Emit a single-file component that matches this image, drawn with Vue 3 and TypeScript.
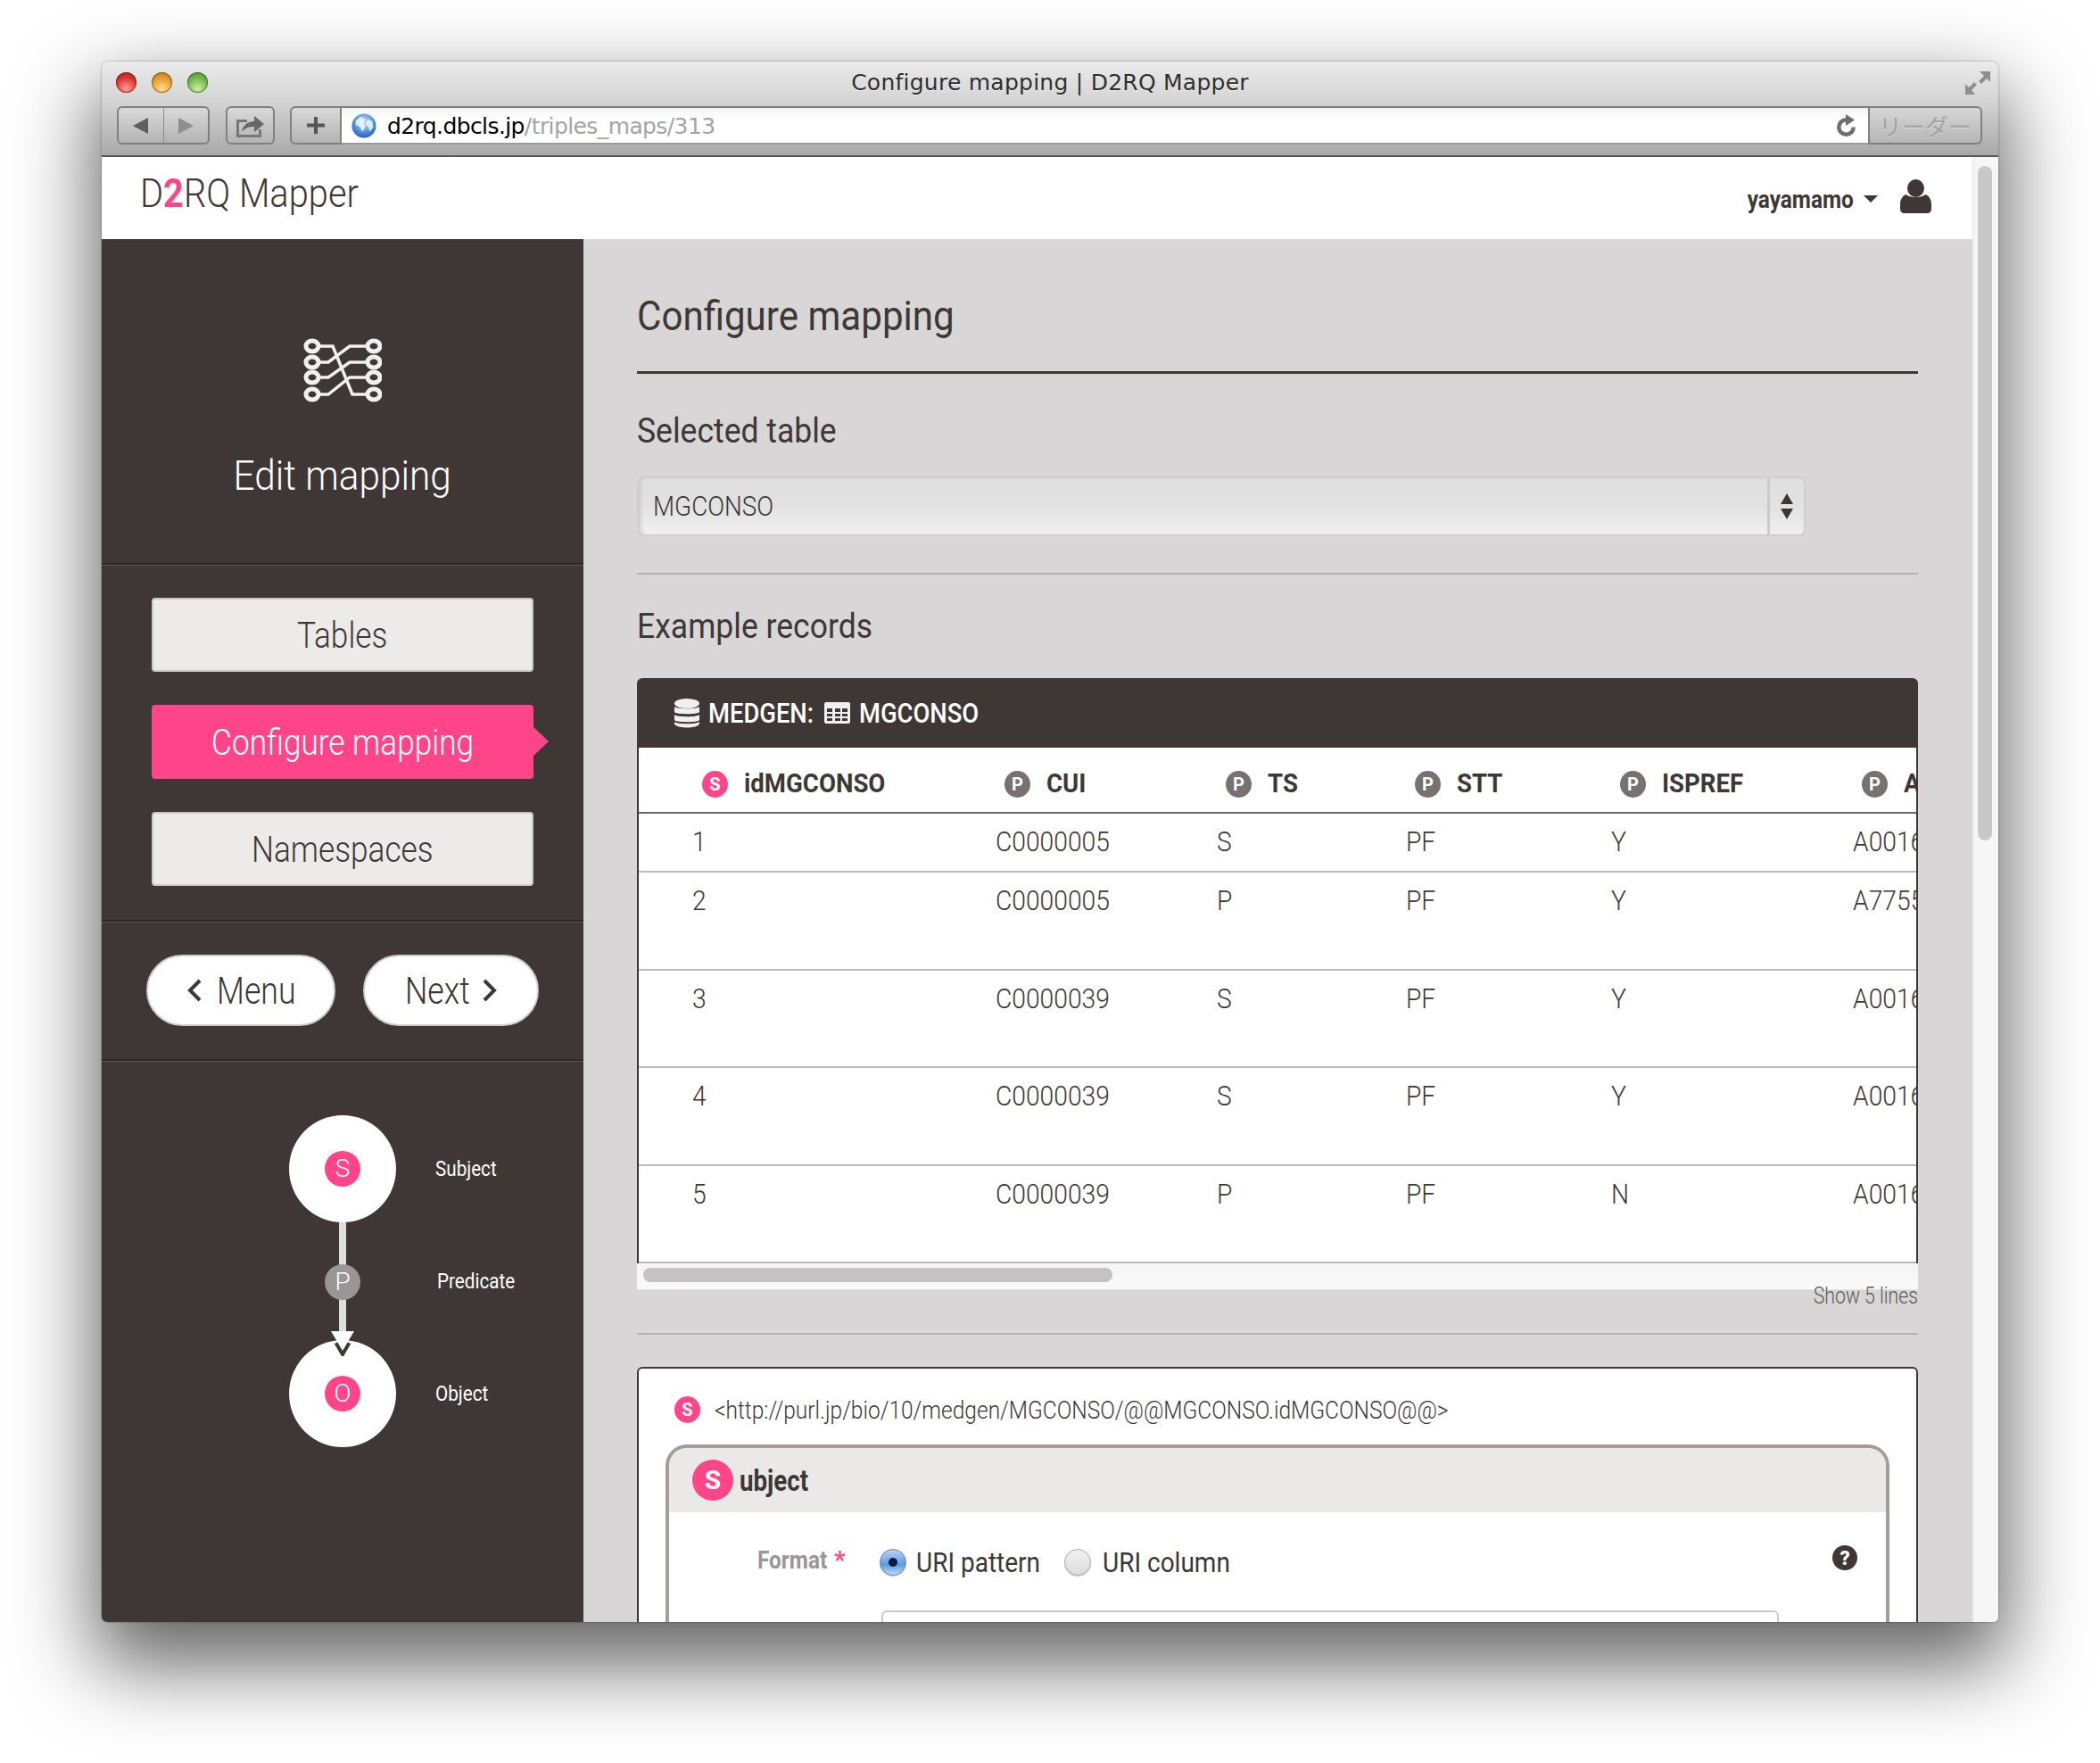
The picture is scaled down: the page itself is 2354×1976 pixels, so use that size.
<script setup lang="ts">
interface Col { name: string; kind: 'S' | 'P' }

const columns: Col[] = [
  { name: 'idMGCONSO', kind: 'S' },
  { name: 'CUI', kind: 'P' },
  { name: 'TS', kind: 'P' },
  { name: 'STT', kind: 'P' },
  { name: 'ISPREF', kind: 'P' },
  { name: 'AUI', kind: 'P' },
]

const rows: string[][] = [
  ['1', 'C0000005', 'S', 'PF', 'Y', 'A0016458'],
  ['2', 'C0000005', 'P', 'PF', 'Y', 'A7755565'],
  ['3', 'C0000039', 'S', 'PF', 'Y', 'A0016515'],
  ['4', 'C0000039', 'S', 'PF', 'Y', 'A0016516'],
  ['5', 'C0000039', 'P', 'PF', 'N', 'A0016517'],
]

const rowHeights = [66, 110, 109, 110, 109]
const colWidths = [400, 248, 212, 230, 271, 300]

const nodeY = [9, 27, 44, 63]
</script>

<template>
  <div class="stage">
    <div class="window">
      <!-- safari chrome -->
      <div class="chrome">
        <div class="titlebar">
          <div class="lights">
            <span class="light red" />
            <span class="light amber" />
            <span class="light green" />
          </div>
          <div class="title">Configure mapping | D2RQ Mapper</div>
          <svg class="resize" viewBox="0 0 28 28">
            <path d="M16 1h12v12l-4-4-6 6-3-3 6-6z" fill="#8f8f8f" />
            <path d="M0 15l4 4 6-6 3 3-6 6 4 5H0z" fill="#8f8f8f" />
          </svg>
        </div>
        <div class="toolbar">
          <div class="tool nav">
            <span class="nav-half">
              <svg width="17" height="18" viewBox="0 0 17 18"><path d="M17 0v18L0 9z" fill="#5e5e5e" /></svg>
            </span>
            <span class="nav-half">
              <svg width="17" height="18" viewBox="0 0 17 18"><path d="M0 0v18l17-9z" fill="#8e8e8e" /></svg>
            </span>
          </div>
          <div class="tool share">
            <svg width="32" height="26" viewBox="0 0 32 26">
              <path d="M0 6h12v3H3v14h22v-6h3v9H0z" fill="#777" />
              <path d="M6 20c1-7 6-12 14-12V2l11 9-11 9v-6c-6 0-10 1-14 6z" fill="#666" />
            </svg>
          </div>
          <div class="addr">
            <div class="tool plus">
              <svg width="20" height="19" viewBox="0 0 20 19"><path d="M8 0h4v7.500h8v4h-8V19H8v-7.500H0v-4h8z" fill="#555" /></svg>
            </div>
            <div class="url">
              <svg class="globe" viewBox="0 0 30 30">
                <defs>
                  <radialGradient id="sea" cx="50%" cy="35%" r="70%">
                    <stop offset="0" stop-color="#cfe4fb" />
                    <stop offset="0.6" stop-color="#4f90dc" />
                    <stop offset="1" stop-color="#1b56ac" />
                  </radialGradient>
                </defs>
                <circle cx="15" cy="15" r="14.500" fill="url(#sea)" />
                <path d="M5 9l6-5 5 3-2 5 3 4-4 6-3-6-5-2zM20 7l5 3 1 7-4 5-2-6-3-3z" fill="#f2f7fd" opacity="0.85" />
              </svg>
              <span class="url-text"><span class="host">d2rq.dbcls.jp</span><span class="path">/triples_maps/313</span></span>
              <svg class="reload" viewBox="0 0 21 25">
                <path d="M10.500 6.300a8.200 8.200 0 1 0 8.200 8.200" fill="none" stroke="#6e6e6e" stroke-width="4.500" />
                <path d="M10 0l10 6.500L10 13z" fill="#6e6e6e" />
              </svg>
            </div>
            <div class="reader">リーダー</div>
          </div>
        </div>
      </div>

      <div class="viewport">
        <div class="page">
          <header class="navbar">
            <div class="brand"><span class="brand-text">D<b>2</b>RQ Mapper</span></div>
            <div class="account">
              <span class="username">yayamamo</span>
              <span class="caret" />
              <svg class="user" viewBox="0 0 35 38">
                <ellipse cx="17.500" cy="10" rx="9.500" ry="10" fill="#3f3735" />
                <path d="M7 17c3 4 18 4 21 0 4 1 7 5 7 11v5c0 3-2 5-5 5H5c-3 0-5-2-5-5v-5c0-6 3-10 7-11z" fill="#3f3735" />
              </svg>
            </div>
          </header>

          <div class="body">
            <aside class="sidebar">
              <div class="side-head">
                <svg class="net" viewBox="0 0 88 72">
                  <g fill="none" stroke="#f1f0f0" stroke-width="3.500">
                    <path d="M9 9h24l22 54h24" />
                    <path d="M9 27h19l24-18h27" />
                    <path d="M9 44h19l24-17h27" />
                    <path d="M9 63h19l24-19h27" />
                  </g>
                  <g v-for="y in nodeY" :key="y" fill="#3f3735" stroke="#f1f0f0" stroke-width="5">
                    <ellipse cx="10" :cy="y" rx="7" ry="6" />
                    <ellipse cx="79" :cy="y" rx="7" ry="6" />
                  </g>
                </svg>
                <div class="side-title"><span class="side-title-text">Edit mapping</span></div>
              </div>
              <div class="side-steps">
                <a class="step"><span class="step-text">Tables</span></a>
                <a class="step active"><span class="step-text">Configure mapping</span></a>
                <a class="step"><span class="step-text">Namespaces</span></a>
              </div>
              <div class="side-pager">
                <a class="pill pill-menu">
                  <svg width="16" height="26" viewBox="0 0 16 26"><path d="M14 2L3 13l11 11" fill="none" stroke="#3f3735" stroke-width="4" /></svg>
                  <span class="pill-text menu-w">Menu</span>
                </a>
                <a class="pill pill-next">
                  <span class="pill-text next-w">Next</span>
                  <svg width="16" height="26" viewBox="0 0 16 26"><path d="M2 2l11 11L2 24" fill="none" stroke="#3f3735" stroke-width="4" /></svg>
                </a>
              </div>
              <div class="legend">
                <div class="legend-graph">
                  <div class="node"><span class="dot">S</span></div>
                  <div class="edge">
                    <span class="dot dot-p">P</span>
                    <svg class="arrow" viewBox="0 0 26 28">
                      <path d="M6 13l7 12 7-12" fill="none" stroke="#3f3735" stroke-width="5" />
                      <path d="M0 0h26L13 22z" fill="#fff" />
                    </svg>
                  </div>
                  <div class="node"><span class="dot">O</span></div>
                </div>
                <span class="lg lg-s">Subject</span>
                <span class="lg lg-p">Predicate</span>
                <span class="lg lg-o">Object</span>
              </div>
            </aside>

            <main class="main">
              <h1 class="heading"><span class="heading-text">Configure mapping</span></h1>
              <h2 class="sub sub-table"><span class="sub-text">Selected table</span></h2>
              <div class="select">
                <span class="select-value">MGCONSO</span>
                <span class="select-arrows">
                  <svg width="14" height="29" viewBox="0 0 14 29"><path d="M7 0l7 12H0zM0 17h14L7 29z" fill="#3f3735" /></svg>
                </span>
              </div>
              <div class="rule" />
              <h2 class="sub sub-records"><span class="sub-text">Example records</span></h2>

              <section class="records">
                <div class="records-head">
                  <svg class="ic-db" viewBox="0 0 28 33">
                    <g fill="#f1f0f0">
                      <ellipse cx="14" cy="5.500" rx="14" ry="5.500" />
                      <path d="M0 9c3 3 25 3 28 0v6c-1 3-27 3-28 0zM0 18c3 3 25 3 28 0v6c-1 3-27 3-28 0zM0 26c3 3 25 3 28 0v2c-1 6-27 6-28 0z" />
                    </g>
                  </svg>
                  <span class="head-text head-db">MEDGEN:</span>
                  <svg class="ic-table" viewBox="0 0 29 24">
                    <path d="M2 0h25a2 2 0 0 1 2 2v20a2 2 0 0 1-2 2H2a2 2 0 0 1-2-2V2a2 2 0 0 1 2-2zm1 7v4h6V7zm9 0v4h6V7zm8 0v4h6V7zM3 13v3h6v-3zm9 0v3h6v-3zm8 0v3h6v-3zM3 18v3h6v-3zm9 0v3h6v-3zm8 0v3h6v-3z" fill="#f1f0f0" fill-rule="evenodd" />
                  </svg>
                  <span class="head-text">MGCONSO</span>
                </div>
                <div class="records-scroll">
                  <table class="records-table">
                    <colgroup>
                      <col v-for="(w, i) in colWidths" :key="i" :style="{ width: w + 'px' }" />
                    </colgroup>
                    <thead>
                      <tr>
                        <th v-for="c in columns" :key="c.name">
                          <span class="th-inner">
                            <span class="badge" :class="c.kind === 'S' ? 'badge-s' : 'badge-p'">{{ c.kind }}</span>
                            <span class="th-text">{{ c.name }}</span>
                          </span>
                        </th>
                      </tr>
                    </thead>
                    <tbody>
                      <tr v-for="(r, i) in rows" :key="i" :style="{ height: rowHeights[i] + 'px' }">
                        <td v-for="(v, j) in r" :key="j"><span class="cell-text">{{ v }}</span></td>
                      </tr>
                    </tbody>
                  </table>
                </div>
                <div class="hscroll"><span class="hscroll-thumb" /></div>
              </section>
              <div class="show-lines"><span class="show-text">Show 5 lines</span></div>
              <div class="rule rule-2" />

              <section class="mapping">
                <div class="mapping-uri">
                  <span class="badge badge-s badge-uri">S</span>
                  <span class="uri-text">&lt;http://purl.jp/bio/10/medgen/MGCONSO/@@MGCONSO.idMGCONSO@@&gt;</span>
                </div>
                <div class="subject">
                  <div class="subject-head">
                    <span class="subject-s">S</span><span class="subject-word">ubject</span>
                  </div>
                  <div class="subject-form">
                    <span class="form-label"><span class="form-text">Format</span><i>*</i></span>
                    <span class="radio on"><span class="radio-pip" /></span>
                    <span class="radio-label label-a"><span class="radio-text">URI pattern</span></span>
                    <span class="radio" />
                    <span class="radio-label label-b"><span class="radio-text">URI column</span></span>
                    <svg class="help" viewBox="0 0 28 28">
                      <circle cx="14" cy="14" r="14" fill="#3f3735" />
                      <text x="14" y="21.500" text-anchor="middle" fill="#fff" font-family="Roboto, sans-serif" font-weight="900" font-size="22">?</text>
                    </svg>
                  </div>
                  <div class="form-input" />
                </div>
              </section>
            </main>
          </div>
        </div>
        <div class="scrollbar"><span class="scroll-thumb" /></div>
      </div>
    </div>
  </div>
</template>

<style>
html, body { margin: 0; background: #fff; }
</style>

<style scoped>
.stage {
  box-sizing: border-box;
  width: 2354px;
  height: 1976px;
  padding: 69px 114px 0;
  overflow: hidden;
  background: #fff;
  font-family: Roboto, "Noto Sans", sans-serif;
  color: #3f3735;
}
.window {
  display: flex;
  flex-direction: column;
  width: 2126px;
  height: 1749px;
  overflow: hidden;
  border-radius: 8px 8px 6px 6px;
  box-shadow: 0 40px 90px 8px rgba(0, 0, 0, 0.62), 0 0 2px rgba(0, 0, 0, 0.5);
}

/* the reference face runs narrower than Roboto, so text gets squeezed */
.brand-text, .side-title-text, .step-text, .pill-text, .heading-text, .sub-text,
.select-value, .head-text, .th-text, .cell-text, .show-text, .uri-text,
.subject-word, .form-text, .radio-text, .username {
  display: inline-block;
  white-space: nowrap;
  transform-origin: left center;
}

/* ── Chrome ─────────────────────────────────────── */
.chrome {
  height: 107px;
  flex-shrink: 0;
  box-sizing: border-box;
  background: linear-gradient(#ebebeb, #d2d2d2 45%, #a9a9a9);
  border-bottom: 2px solid #575757;
}
.titlebar {
  display: flex;
  align-items: center;
  height: 46px;
  position: relative;
}
.lights {
  display: flex;
  gap: 17px;
  margin-left: 16px;
}
.light {
  width: 23px;
  height: 23px;
  border-radius: 50%;
  box-shadow: inset 0 0 0 1px rgba(0, 0, 0, 0.35);
}
.red { background: radial-gradient(circle at 50% 80%, #ff9d96, #d8312b 60%, #a8201c); }
.amber { background: radial-gradient(circle at 50% 80%, #ffdd86, #e09a25 60%, #b4741a); }
.green { background: radial-gradient(circle at 50% 80%, #c8f29b, #6eb444 60%, #4a8c2c); }
.title {
  position: absolute;
  left: 0;
  right: 0;
  text-align: center;
  font-family: "DejaVu Sans", sans-serif;
  font-size: 25px;
  letter-spacing: 0.25px;
  color: #2e2e2e;
  text-shadow: 0 1px 0 rgba(255, 255, 255, 0.6);
}
.resize {
  position: absolute;
  left: 2089px;
  top: 10px;
  width: 28px;
  height: 28px;
}
.toolbar {
  display: flex;
  padding-left: 17px;
  height: 43px;
  margin-top: 4px;
}
.tool {
  box-sizing: border-box;
  height: 43px;
  display: flex;
  align-items: center;
  justify-content: center;
  background: linear-gradient(#d9d9d9, #b3b3b3);
  border: 2px solid #808080;
  border-radius: 6px;
}
.nav { width: 104px; }
.nav-half {
  flex: 1;
  height: 100%;
  display: flex;
  align-items: center;
  justify-content: center;
}
.nav-half:first-child { border-right: 1px solid #8a8a8a; }
.share { width: 55px; margin-left: 18px; }
.addr {
  display: flex;
  margin-left: 17px;
  width: 1897px;
}
.plus {
  width: 58px;
  border-radius: 6px 0 0 6px;
}
.url {
  flex: 1;
  display: flex;
  align-items: center;
  box-sizing: border-box;
  background: linear-gradient(#f3f3f3, #fff 30%);
  border-top: 2px solid #7d7d7d;
  border-bottom: 2px solid #9a9a9a;
  padding: 0 14px 0 11px;
}
.globe { width: 28px; height: 30px; flex-shrink: 0; }
.url-text {
  margin: 2px 0 0 12px;
  font-family: "DejaVu Sans", sans-serif;
  font-size: 25px;
  letter-spacing: -0.6px;
  flex: 1;
}
.host { color: #000; }
.path { color: #a4a4a4; }
.reload { width: 21px; height: 25px; }
.reader {
  box-sizing: border-box;
  width: 128px;
  text-align: center;
  line-height: 39px;
  font-family: "Noto Sans CJK JP", sans-serif;
  font-size: 26px;
  color: #a2a2a2;
  text-shadow: 0 1px 0 rgba(255, 255, 255, 0.5);
  background: linear-gradient(#d6d6d6, #b6b6b6);
  border: 2px solid #808080;
  border-radius: 0 6px 6px 0;
}

/* ── Page ───────────────────────────────────────── */
.viewport {
  flex: 1;
  display: flex;
  min-height: 0;
}
.page {
  flex: 1;
  min-width: 0;
  display: flex;
  flex-direction: column;
}
.scrollbar {
  box-sizing: border-box;
  width: 29px;
  padding: 10px 7px 0 4px;
  background: #f6f6f6;
  border-left: 2px solid #ececec;
}
.scroll-thumb {
  display: block;
  width: 16px;
  height: 756px;
  border-radius: 8px;
  background: #c8c8c8;
}
.navbar {
  height: 92px;
  flex-shrink: 0;
  display: flex;
  align-items: center;
  justify-content: space-between;
  background: #fff;
  padding: 0 46px 0 43px;
}
.brand {
  font-size: 44px;
  font-weight: 300;
  margin-top: -10px;
}
.brand-text { transform: scaleX(0.905); }
.brand b { color: #ff4589; font-weight: 700; }
.account {
  display: flex;
  align-items: center;
  margin-top: -4px;
}
.username {
  font-size: 28px;
  font-weight: 700;
  margin-top: 6px;
  transform-origin: right center;
  transform: scaleX(0.87);
}
.caret {
  width: 0;
  height: 0;
  margin: 6px 25px 0 11px;
  border-left: 8px solid transparent;
  border-right: 8px solid transparent;
  border-top: 8px solid #3f3735;
}
.user { width: 35px; height: 38px; }
.body {
  flex: 1;
  min-height: 0;
  display: flex;
}

/* ── Sidebar ────────────────────────────────────── */
.sidebar {
  width: 540px;
  flex-shrink: 0;
  background: #3f3735;
  display: flex;
  flex-direction: column;
}
.side-head {
  height: 365px;
  box-sizing: border-box;
  padding-top: 111px;
  display: flex;
  flex-direction: column;
  align-items: center;
  border-bottom: 2px solid #2e2725;
  box-shadow: 0 1px 0 #5d5553;
}
.net { width: 88px; height: 72px; }
.side-title {
  margin-top: 52px;
  font-size: 46px;
  line-height: 60px;
  font-weight: 300;
  color: #fff;
}
.side-title-text { transform-origin: center; transform: scaleX(0.92); }
.side-steps {
  height: 400px;
  box-sizing: border-box;
  padding: 37px 56px 0;
  display: flex;
  flex-direction: column;
  gap: 37px;
  border-bottom: 2px solid #2e2725;
  box-shadow: 0 1px 0 #5d5553;
}
.step {
  position: relative;
  box-sizing: border-box;
  height: 83px;
  line-height: 81px;
  text-align: center;
  font-size: 40px;
  font-weight: 300;
  background: #edeaea;
  border: 2px solid #cbc8c8;
  border-radius: 4px;
}
.step-text { transform-origin: center; transform: scaleX(0.88); }
.step.active {
  background: #ff4589;
  border-color: #ff4589;
  color: #fff;
}
.step.active::after {
  content: "";
  position: absolute;
  right: -19px;
  top: 23px;
  border-left: 17px solid #ff4589;
  border-top: 16px solid transparent;
  border-bottom: 16px solid transparent;
}
.side-pager {
  height: 156px;
  box-sizing: border-box;
  padding: 37px 50px 0;
  display: flex;
  justify-content: space-between;
  border-bottom: 2px solid #2e2725;
  box-shadow: 0 1px 0 #5d5553;
}
.pill {
  box-sizing: border-box;
  height: 80px;
  display: flex;
  align-items: center;
  justify-content: center;
  gap: 17px;
  font-size: 42px;
  font-weight: 300;
  background: #fff;
  border: 2px solid #cfcccc;
  border-radius: 40px;
}
.pill-text { transform: scaleX(0.85); }
.menu-w { width: 87px; }
.next-w { width: 70px; }
.pill-menu { width: 212px; }
.pill-next { width: 197px; }
.legend {
  position: relative;
  flex: 1;
}
.legend-graph {
  position: absolute;
  left: 210px;
  top: 61px;
  width: 120px;
  display: flex;
  flex-direction: column;
  align-items: center;
}
.node {
  position: relative;
  z-index: 1;
  width: 120px;
  height: 120px;
  border-radius: 50%;
  background: #fff;
  display: flex;
  align-items: center;
  justify-content: center;
}
.dot {
  width: 40px;
  height: 40px;
  border-radius: 50%;
  background: #ff4589;
  color: #fff;
  font-size: 28px;
  font-weight: 300;
  line-height: 40px;
  text-align: center;
}
.edge {
  position: relative;
  width: 8px;
  height: 132px;
  background: #ddd;
  display: flex;
  justify-content: center;
}
.dot-p {
  position: absolute;
  top: 47px;
  left: -16px;
  background: #9b9695;
  flex-shrink: 0;
}
.arrow {
  position: absolute;
  z-index: 2;
  left: -9px;
  top: 122px;
  width: 26px;
  height: 28px;
}
.lg {
  position: absolute;
  color: #fff;
  font-size: 24px;
  line-height: 30px;
  white-space: nowrap;
  transform-origin: left center;
  transform: scaleX(0.86);
}
.lg-s { left: 374px; top: 106px; }
.lg-p { left: 376px; top: 232px; }
.lg-o { left: 374px; top: 358px; }

/* ── Main ───────────────────────────────────────── */
.main {
  flex: 1;
  min-width: 0;
  overflow: hidden;
  background: #d8d6d7;
  padding: 0 61px 0 60px;
}
.heading {
  margin: 56px 0 0;
  padding-bottom: 32px;
  border-bottom: 3px solid #3f3735;
  font-size: 46px;
  line-height: 60px;
  font-weight: 400;
}
.heading-text { transform: scaleX(0.915); }
.sub {
  margin: 0;
  font-size: 38px;
  line-height: 50px;
  font-weight: 400;
}
.sub-text { transform: scaleX(0.935); }
.sub-table { margin-top: 39px; }
.sub-records { margin-top: 33px; }
.select {
  box-sizing: border-box;
  width: 1310px;
  height: 67px;
  margin-top: 26px;
  display: flex;
  align-items: center;
  justify-content: space-between;
  background: linear-gradient(#dfdfdf, #e2e2e2 50%, #f0f0f0);
  border: 2px solid #cfcdcd;
  border-radius: 8px;
  box-shadow: inset 5px 0 4px -3px #c9c7c7;
}
.select-value {
  margin: 0 0 2px 16px;
  font-size: 32px;
  font-weight: 300;
  transform: scaleX(0.87);
}
.select-arrows {
  width: 38px;
  height: 100%;
  display: flex;
  align-items: center;
  justify-content: center;
  border-left: 3px solid #cbc9c9;
}
.rule {
  height: 2px;
  margin-top: 41px;
  background: #b5b1b1;
}
.rule-2 { margin-top: 26px; }

/* ── Records table ──────────────────────────────── */
.records { margin-top: 33px; }
.records-head {
  height: 78px;
  box-sizing: border-box;
  padding-left: 42px;
  display: flex;
  align-items: center;
  gap: 10px;
  background: #3f3735;
  color: #fff;
  border-radius: 6px 6px 0 0;
  font-size: 32px;
  font-weight: 500;
}
.head-text { transform: scaleX(0.855); }
.head-db { width: 120px; }
.ic-db { width: 28px; height: 33px; }
.ic-table { width: 29px; height: 24px; }
.records-scroll {
  overflow: hidden;
  background: #fff;
  border-left: 2px solid #3f3735;
  border-right: 2px solid #3f3735;
}
.records-table {
  table-layout: fixed;
  width: 1661px;
  border-collapse: separate;
  border-spacing: 0;
}
.records-table th {
  height: 74px;
  padding: 5px 0 0 10px;
  box-sizing: border-box;
  text-align: left;
  border-bottom: 2px solid #6b6563;
  white-space: nowrap;
  font-size: 30px;
  font-weight: 700;
}
.records-table td:first-child { padding-left: 60px; }
.records-table th:first-child { padding-left: 71px; }
.records-table td {
  padding: 10px 0 0;
  box-sizing: border-box;
  vertical-align: top;
  border-bottom: 2px solid #bdbaba;
  font-size: 31px;
  line-height: 44px;
  font-weight: 300;
}
.th-inner {
  display: inline-flex;
  align-items: center;
  gap: 18px;
}
.th-text { transform: scaleX(0.92); }
.cell-text { transform: scaleX(0.91); }
.badge {
  display: inline-block;
  width: 29px;
  height: 30px;
  border-radius: 50%;
  text-align: center;
  color: #fff;
  font-size: 20px;
  font-weight: 700;
  line-height: 30px;
  margin-top: 4px;
}
.badge-s { background: #ff4589; }
.badge-p { background: #78716f; }
.hscroll {
  height: 30px;
  box-sizing: border-box;
  padding: 5px 0 0 7px;
  background: linear-gradient(#f4f4f4, #fafafa);
  border-bottom: 1px solid #e0dede;
}
.hscroll-thumb {
  display: block;
  width: 526px;
  height: 16px;
  border-radius: 8px;
  background: #c4c2c2;
}
.show-lines {
  margin-top: -8px;
  text-align: right;
  font-size: 25px;
  line-height: 30px;
  font-weight: 300;
  color: #5f5957;
}
.show-text { transform-origin: right center; transform: scaleX(0.85); }

/* ── Mapping box ────────────────────────────────── */
.mapping {
  margin-top: 36px;
  height: 400px;
  box-sizing: border-box;
  padding: 31px 30px 0 30px;
  background: #fff;
  border: 2px solid #3f3735;
  border-radius: 6px;
}
.mapping-uri {
  display: flex;
  align-items: center;
  gap: 16px;
  height: 30px;
  padding-left: 10px;
  font-size: 28px;
  font-weight: 300;
}
.uri-text { transform: scaleX(0.875); }
.badge-uri { margin-top: 0; flex-shrink: 0; }
.subject {
  margin-top: 24px;
  border: 4px solid #a59c98;
  border-bottom: 0;
  border-radius: 24px 24px 0 0;
  height: 400px;
  overflow: hidden;
}
.subject-head {
  height: 72px;
  display: flex;
  align-items: center;
  padding-left: 26px;
  background: #ebe9e8;
}
.subject-s {
  width: 46px;
  height: 46px;
  border-radius: 50%;
  background: #ff4589;
  color: #fff;
  text-align: center;
  font-size: 30px;
  font-weight: 700;
  line-height: 46px;
}
.subject-word {
  margin-left: 7px;
  font-size: 33px;
  font-weight: 700;
  transform: scaleX(0.84);
}
.subject-form {
  position: relative;
  display: flex;
  align-items: center;
  height: 30px;
  margin-top: 41px;
  padding-left: 99px;
}
.form-label {
  display: flex;
  width: 137px;
  margin-top: -6px;
  font-size: 28px;
  font-weight: 700;
  color: #9b9695;
}
.form-text { width: 86px; transform: scaleX(0.87); }
.form-label i { color: #ff4589; font-style: normal; }
.radio {
  flex-shrink: 0;
  box-sizing: border-box;
  width: 30px;
  height: 30px;
  border-radius: 50%;
  display: flex;
  align-items: center;
  justify-content: center;
  background: linear-gradient(#f2f2f2, #dcdcdc);
  border: 1px solid #a9a9a9;
  box-shadow: 0 1px 1px rgba(0, 0, 0, 0.25);
}
.radio.on {
  background: linear-gradient(#b9d3f2, #5a9be6 60%, #bcdcfb);
  border-color: #6b7f99;
}
.radio-pip {
  width: 10px;
  height: 10px;
  border-radius: 50%;
  background: #0c1c3c;
}
.radio-label {
  font-size: 32px;
  font-weight: 400;
}
.label-a { width: 140px; margin: 0 26px 0 11px; }
.label-b { width: 142px; margin-left: 13px; }
.radio-text { transform: scaleX(0.875); }
.help {
  position: absolute;
  right: 32px;
  top: -4px;
  width: 28px;
  height: 28px;
}
.form-input {
  box-sizing: border-box;
  width: 1006px;
  height: 60px;
  margin: 39px 0 0 238px;
  background: #fff;
  border: 2px solid #cbc9c9;
  border-radius: 6px;
}
</style>
